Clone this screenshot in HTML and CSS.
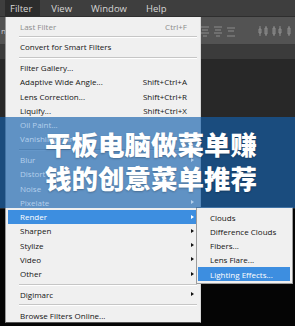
FILE: index.html
```html
<!DOCTYPE html>
<html lang="en">
<head>
  <meta charset="UTF-8">
  <title>Filter Menu</title>
  <link rel="stylesheet" href="styles.css">
</head>
<body>
  <div class="app">
    <div class="menubar">
      <span class="mb-item active">Filter</span>
      <span class="mb-item">View</span>
      <span class="mb-item">Window</span>
      <span class="mb-item">Help</span>
    </div>

    <div class="options">
      <span class="side-label">n</span>
      <div class="align-icons">
        <svg width="96" height="14" viewBox="0 0 96 14">
          <g fill="none" stroke="#8c8c8c" stroke-width="1">
            <path d="M2 3h8M3 6h6M2 9h8M4 12h4"/>
            <path d="M15 3h8M16 6h6M15 9h8M17 12h4"/>
            <path d="M28 4h8M29 7h6M28 12h8"/>
            <path d="M61 2v10M67 2v10M60 5h2v4h-2zM66 4h2v6h-2z"/>
            <path d="M75 2v10M81 2v10M74 4h2v6h-2zM80 5h2v4h-2z"/>
            <path d="M90 2v10M89 4h2v6h-2z"/>
          </g>
        </svg>
      </div>
    </div>
    <div class="tabs"></div>
    <div class="canvas"></div>
    <div class="canvas-low"></div>

    <div class="menu">
      <div class="row disabled"><span>Last Filter</span><span class="key">Ctrl+F</span></div>
      <div class="sep"></div>
      <div class="row"><span>Convert for Smart Filters</span></div>
      <div class="sep"></div>
      <div class="row"><span>Filter Gallery...</span></div>
      <div class="row"><span>Adaptive Wide Angle...</span><span class="key">Shift+Ctrl+A</span></div>
      <div class="row"><span>Lens Correction...</span><span class="key">Shift+Ctrl+R</span></div>
      <div class="row"><span>Liquify...</span><span class="key">Shift+Ctrl+X</span></div>
      <div class="row washed"><span>Oil Paint...</span></div>
      <div class="row washed"><span>Vanishing Point...</span></div>
      <div class="sep"></div>
      <div class="row washed"><span>Blur</span><span class="arrow"></span></div>
      <div class="row washed"><span>Distort</span><span class="arrow"></span></div>
      <div class="row washed"><span>Noise</span><span class="arrow"></span></div>
      <div class="row washed"><span>Pixelate</span><span class="arrow"></span></div>
      <div class="row selected"><span>Render</span><span class="arrow"></span></div>
      <div class="row"><span>Sharpen</span><span class="arrow"></span></div>
      <div class="row"><span>Stylize</span><span class="arrow"></span></div>
      <div class="row"><span>Video</span><span class="arrow"></span></div>
      <div class="row"><span>Other</span><span class="arrow"></span></div>
      <div class="sep"></div>
      <div class="row"><span>Digimarc</span><span class="arrow"></span></div>
      <div class="sep"></div>
      <div class="row"><span>Browse Filters Online...</span></div>
    </div>

    <div class="submenu">
      <div class="row"><span>Clouds</span></div>
      <div class="row"><span>Difference Clouds</span></div>
      <div class="row"><span>Fibers...</span></div>
      <div class="row"><span>Lens Flare...</span></div>
      <div class="row selected"><span>Lighting Effects...</span></div>
    </div>

    <div class="banner">
      <p>平板电脑做菜单赚</p>
      <p>钱的创意菜单推荐</p>
    </div>
  </div>
</body>
</html>
```

FILE: styles.css
```css
body {
  margin: 0;
  background: #050505;
  font-family: 'Open Sans', 'Noto Sans', sans-serif;
}

.app {
  position: relative;
  width: 295px;
  height: 326px;
  overflow: hidden;
  display: flex;
  flex-direction: column;
  background: #050505;
}

/* top menubar */
.menubar {
  height: 17px;
  display: flex;
  align-items: stretch;
  padding-left: 5px;
  background: #3e3e3e;
  border-bottom: 1px solid #2e2e2e;
  box-sizing: border-box;
}

.mb-item {
  display: flex;
  align-items: center;
  padding: 0 7px 0 5px;
  margin-right: 7px;
  font-size: 9.5px;
  color: #d6d6d6;
}

.mb-item.active {
  background: #2c2c2c;
  padding-right: 8px;
  margin-right: 6px;
}

/* options bar + tabs behind the menu */
.options {
  height: 27px;
  display: flex;
  align-items: center;
  justify-content: space-between;
  background: #535353;
  border-bottom: 1px solid #3a3a3a;
}

.side-label {
  font-size: 8px;
  color: #cfcfcf;
  padding-left: 1px;
}

.align-icons {
  display: flex;
}

.tabs {
  height: 14px;
  background: #3b3b3b;
}

.canvas {
  height: 150px;
  background: #282828;
}

.canvas-low {
  flex: 1;
  background: #050505;
}

/* dropdown */
.menu {
  position: absolute;
  left: 5px;
  top: 17px;
  width: 194px;
  padding: 2px 0 0;
  background: #f0f0f0;
  border-left: 1px solid #9a9a9a;
  border-right: 1px solid #d8d8d8;
  border-bottom: 1px solid #555;
  font-size: 8px;
  color: #141414;
}

.row {
  display: flex;
  align-items: center;
  height: 14.25px;
  padding: 0 6px 0 14px;
  white-space: nowrap;
}

.row .key {
  margin-left: auto;
  margin-right: 7px;
}

.arrow {
  margin-left: auto;
  width: 0;
  height: 0;
  border-top: 2.5px solid transparent;
  border-bottom: 2.5px solid transparent;
  border-left: 3px solid #111;
}

.row.disabled {
  color: #8c8c8c;
}

/* items under the title band read as pale text */
.row.washed {
  position: relative;
  z-index: 2;
  color: #b4d0ec;
}

.row.washed .arrow {
  border-left-color: #b4d0ec;
}

.row.selected {
  margin: 0 2px;
  padding-left: 12px;
  padding-right: 4px;
  background: #3d8ee0;
  color: #fff;
}

.row.selected .arrow {
  border-left-color: #fff;
}

.sep {
  height: 1px;
  margin: 2.75px 3px 1.75px 13px;
  background: #c6c6c6;
  border-bottom: 1px solid #fff;
}

/* render submenu */
.submenu {
  position: absolute;
  left: 196px;
  top: 207px;
  width: 95px;
  padding: 2px 0;
  background: #f0f0f0;
  border: 1px solid #9c9c9c;
  font-size: 8px;
  color: #141414;
}

.submenu .row {
  padding-left: 13px;
}

.submenu .row.selected {
  margin: 0 2px 0 1px;
  padding-left: 12px;
}

/* overlay title */
.banner {
  position: absolute;
  left: 0;
  right: 0;
  top: 117px;
  height: 91px;
  padding: 10px 0 0 45px;
  box-sizing: border-box;
}

.banner::before {
  content: "";
  position: absolute;
  inset: 0;
  z-index: 1;
  background: rgba(18, 95, 172, 0.65);
}

.banner p {
  position: relative;
  z-index: 3;
  margin: 0;
  font-family: 'Noto Sans CJK SC', sans-serif;
  font-weight: 900;
  font-size: 26.5px;
  line-height: 34px;
  color: #fff;
  text-shadow: 0 1px 2px rgba(0, 0, 0, 0.25);
}
```
